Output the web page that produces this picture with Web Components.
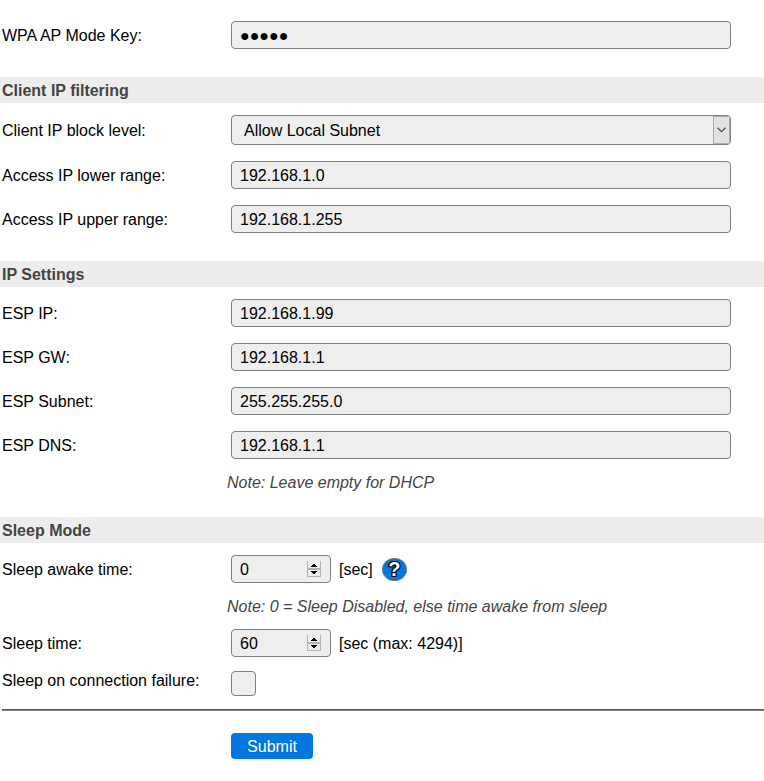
<!DOCTYPE html>
<html lang="en">
<head>
<meta charset="utf-8">
<title>ESP Settings</title>
<style>
html, body { margin: 0; background: #fff; overflow: hidden; }
body { font: 16px/26px "Liberation Sans", Arial, sans-serif; color: #000; }
</style>
</head>
<body>
<config-form>
  <form-row label="WPA AP Mode Key:"><text-field>●●●●●</text-field></form-row>
  <form-section heading="Client IP filtering">
    <form-row label="Client IP block level:"><select-field>Allow Local Subnet</select-field></form-row>
    <form-row label="Access IP lower range:"><text-field>192.168.1.0</text-field></form-row>
    <form-row label="Access IP upper range:"><text-field>192.168.1.255</text-field></form-row>
  </form-section>
  <form-section heading="IP Settings">
    <form-row label="ESP IP:"><text-field>192.168.1.99</text-field></form-row>
    <form-row label="ESP GW:"><text-field>192.168.1.1</text-field></form-row>
    <form-row label="ESP Subnet:"><text-field>255.255.255.0</text-field></form-row>
    <form-row label="ESP DNS:"><text-field>192.168.1.1</text-field></form-row>
    <form-note>Note: Leave empty for DHCP</form-note>
  </form-section>
  <form-section heading="Sleep Mode">
    <form-row label="Sleep awake time:"><number-field>0</number-field><unit-text>[sec]</unit-text><help-button>?</help-button></form-row>
    <form-note>Note: 0 = Sleep Disabled, else time awake from sleep</form-note>
    <form-row label="Sleep time:"><number-field>60</number-field><unit-text>[sec (max: 4294)]</unit-text></form-row>
    <form-row class="check" label="Sleep on connection failure:"><check-box></check-box></form-row>
  </form-section>
  <form-rule></form-rule>
  <submit-button>Submit</submit-button>
</config-form>
<script>
const define = (name, css, html) => customElements.define(name, class extends HTMLElement {
  constructor() {
    super();
    this.attachShadow({ mode: 'open' }).innerHTML = `<style>${css}</style>${html}`;
  }
  connectedCallback() {
    for (const key of ['label', 'heading']) {
      const target = this.shadowRoot.querySelector('.' + key);
      if (target) target.textContent = this.getAttribute(key);
    }
  }
});
const box = 'box-sizing:border-box;border:1px solid #808080;border-radius:4px;background:#eee;';

define('config-form', ':host{display:flex;flex-direction:column;padding-top:13px}', '<slot></slot>');

define('form-section', `
  :host{display:block;padding-top:20px}
  .heading{box-sizing:border-box;margin:0 0 4px;padding:1px 0 0 2px;height:26px;font:bold 16px/26px "Liberation Sans",Arial,sans-serif;color:#444;background:#ededed}`,
  '<h2 class="heading"></h2><slot></slot>');

define('form-row', `
  :host{display:grid;grid-template-columns:229px 1fr;align-items:center;padding:8px 0 8px 2px}
  :host(.check){padding:6px 0 7px 2px}
  :host(.check) .label{align-self:start;margin:-4px 0 -2px}
  .label{line-height:26px;padding-top:2px}
  :host(.check) .label{padding-top:1px}
  .control{display:flex;align-items:center}`,
  '<span class="label"></span><div class="control"><slot></slot></div>');

define('text-field', `:host{display:block;width:500px;height:28px;padding-left:8px;line-height:27px;${box}}`, '<slot></slot>');

define('select-field', `
  :host{display:flex;justify-content:space-between;width:500px;height:30px;padding-left:12px;line-height:30px;overflow:hidden;${box}}
  .arrow{box-sizing:border-box;width:17px;height:28px;border:1px solid #aaa;background:#e1e1e1;display:flex;align-items:center;justify-content:center}
  svg{display:block}`,
  `<span><slot></slot></span><span class="arrow"><svg width="9" height="6" viewBox="0 0 9 6"><path d="M.6 .7 4.5 4.6 8.4 .7" fill="none" stroke="#505050" stroke-width="1.3"/></svg></span>`);

define('number-field', `
  :host{display:flex;align-items:center;justify-content:space-between;width:100px;height:28px;padding:0 9px 0 8px;line-height:27px;${box}}
  svg{display:block}`,
  `<span><slot></slot></span><svg width="14" height="16" viewBox="0 0 14 16" shape-rendering="crispEdges">
    <path d="M.5 0V15.5H13.5V0M0 7.5H14M0 8.5H14" fill="none" stroke="#b4b4b4"/>
    <path d="M6 3h2v1h1v1h1v1H4V5h1V4h1zM4 10h6v1H9v1H8v1H6v-1H5v-1H4z" fill="#000"/></svg>`);

define('unit-text', ':host{display:block;margin-left:8px;padding-top:2px;line-height:26px}', '<slot></slot>');

define('help-button', `
  :host{display:flex;box-sizing:border-box;justify-content:center;width:25px;height:23px;margin:1px 0 0 9px;border:1px solid #6c7883;border-radius:50%;background:#0077dd;
  color:#fff;font-weight:bold;font-size:20px;line-height:21px;
  text-shadow:-1px -1px 0 #000,1px -1px 0 #000,-1px 1px 0 #000,1px 1px 0 #000,0 -1px 0 #000,0 1px 0 #000,1px 0 0 #000,-1px 0 0 #000}`, '<slot></slot>');

define('check-box', `:host{display:block;width:25px;height:25px;${box}}`, '');

define('form-note', ':host{display:block;box-sizing:border-box;height:30px;padding:1px 0 0 227px;line-height:30px;font-style:italic;color:#444}', '<slot></slot>');

define('form-rule', ':host{display:block;height:1px;margin:6px 0 0 2px;background:#555;border-bottom:1px solid #858585}', '');

define('submit-button', `
  :host{display:block;box-sizing:border-box;align-self:flex-start;width:82px;height:26px;margin:22px 0 0 231px;padding-top:1px;border-radius:4px;background:#0077dd;color:#fff;text-align:center;line-height:26px}`, '<slot></slot>');
</script>
</body>
</html>
